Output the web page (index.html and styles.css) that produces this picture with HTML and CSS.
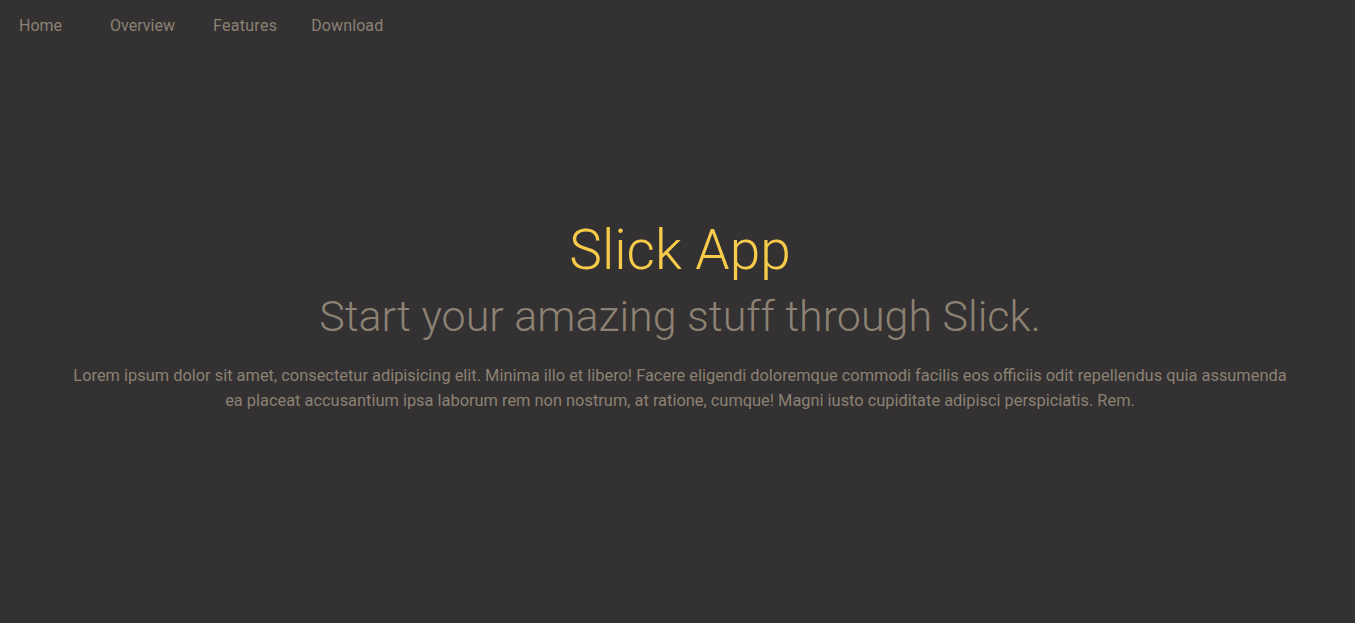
FILE: index.html
```html
<!DOCTYPE html>
<html lang="en">
<head>
<meta charset="utf-8">
<title>Slick App</title>
<link rel="stylesheet" href="styles.css">
</head>
<body>
<nav class="nav">
  <a class="nav-link home" href="#">Home</a>
  <a class="nav-link overview" href="#">Overview</a>
  <a class="nav-link features" href="#">Features</a>
  <a class="nav-link download" href="#">Download</a>
</nav>
<main class="hero">
  <h1 class="title">Slick App</h1>
  <h2 class="subtitle">Start your amazing stuff through Slick.</h2>
  <p class="lead">Lorem ipsum dolor sit amet, consectetur adipisicing elit. Minima illo et libero! Facere eligendi doloremque commodi facilis eos officiis odit repellendus quia assumenda ea placeat accusantium ipsa laborum rem non nostrum, at ratione, cumque! Magni iusto cupiditate adipisci perspiciatis. Rem.</p>
</main>
</body>
</html>
```
FILE: styles.css
```css
html, body {
  margin: 0;
  height: 100%;
}
body {
  background: #333132;
  font-family: Roboto, "Liberation Sans", sans-serif;
  color: #8c8173;
  display: flex;
  flex-direction: column;
}
.nav {
  display: flex;
  align-items: center;
  height: 50px;
  padding-left: 19px;
}
.nav-link {
  color: #8c8173;
  text-decoration: none;
  font-size: 16px;
  margin-right: 36px;
}
.nav-link.home {
  margin-right: 48px;
}
.nav-link.overview {
  margin-right: 38px;
}
.nav-link.features {
  margin-right: 34px;
  letter-spacing: 0.3px;
}
.nav-link.download {
  letter-spacing: 0.1px;
}
.hero {
  flex: 1;
  display: flex;
  flex-direction: column;
  align-items: center;
  padding: 0 60px 0 65px;
  margin-top: 168px;
}
.title {
  margin: 0;
  font-weight: 300;
  font-size: 55px;
  line-height: 64px;
  color: #f9cb4a;
}
.subtitle {
  margin: 8px 0 0;
  font-weight: 300;
  font-size: 43px;
  line-height: 52px;
  color: #8c8173;
}
.lead {
  margin: 21px 0 0;
  font-size: 16.4px;
  line-height: 25px;
  text-align: center;
  max-width: 1220px;
}
```
